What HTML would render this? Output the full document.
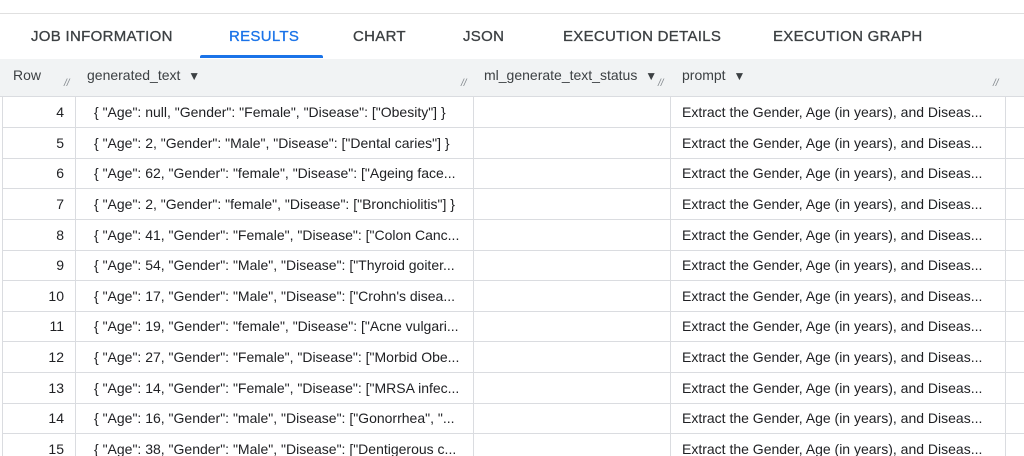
<!DOCTYPE html>
<html style="overflow:hidden;height:456px"><head><meta charset="utf-8"><style>
body{margin:0;width:1024px;height:456px;overflow:hidden;background:#fff;font-family:"Liberation Sans",Arial,sans-serif;position:relative}
.top{position:absolute;left:0;top:0;width:1024px;height:13px;border-bottom:1px solid #e0e0e0}
.tab{position:absolute;top:28px;font-size:15px;color:#3c4043;letter-spacing:0.3px;-webkit-text-stroke:0.3px #3c4043}
.ul{position:absolute;left:200px;top:55px;width:123px;height:3px;background:#1a73e8;border-radius:2px 2px 0 0}
.hdr{position:absolute;left:0;top:59px;width:1024px;height:37px;background:#f1f3f4;border-bottom:1px solid #dadce0}
.h{position:absolute;top:67px;font-size:14px;color:#3c4043}
.h b{font-size:12px;font-weight:normal;margin-left:4px}
.rs{position:absolute;top:78px;font-size:10px;color:#80868b;font-style:italic}
.row{position:absolute;left:2px;width:1022px;height:30px;border-bottom:1px solid #dadce0;font-size:14px;color:#202124}
.row span{position:absolute;top:7px;white-space:nowrap}
.n{right:960px;text-align:right}
.vl{position:absolute;width:1px;background:#dadce0}
</style></head><body>
<div class="top"></div>
<div class="tab" style="left:31px">JOB INFORMATION</div>
<div class="tab" style="left:229px;color:#1a73e8;-webkit-text-stroke:0.3px #1a73e8">RESULTS</div>
<div class="tab" style="left:353px">CHART</div>
<div class="tab" style="left:463px">JSON</div>
<div class="tab" style="left:563px">EXECUTION DETAILS</div>
<div class="tab" style="left:773px">EXECUTION GRAPH</div>
<div class="ul"></div>
<div class="hdr"></div>
<div class="h" style="left:13px">Row</div>
<div class="h" style="left:87px">generated_text <b>▼</b></div>
<div class="h" style="left:484px">ml_generate_text_status <b>▼</b></div>
<div class="h" style="left:682px">prompt <b>▼</b></div>
<div class="rs" style="left:64px">//</div>
<div class="rs" style="left:461px">//</div>
<div class="rs" style="left:658px">//</div>
<div class="rs" style="left:993px">//</div>
<div class="row" style="top:97px"><span class="n">4</span><span style="left:92px">{ "Age": null, "Gender": "Female", "Disease": ["Obesity"] }</span><span style="left:680px">Extract the Gender, Age (in years), and Diseas...</span></div>
<div class="row" style="top:128px"><span class="n">5</span><span style="left:92px">{ "Age": 2, "Gender": "Male", "Disease": ["Dental caries"] }</span><span style="left:680px">Extract the Gender, Age (in years), and Diseas...</span></div>
<div class="row" style="top:158px"><span class="n">6</span><span style="left:92px">{ "Age": 62, "Gender": "female", "Disease": ["Ageing face...</span><span style="left:680px">Extract the Gender, Age (in years), and Diseas...</span></div>
<div class="row" style="top:189px"><span class="n">7</span><span style="left:92px">{ "Age": 2, "Gender": "female", "Disease": ["Bronchiolitis"] }</span><span style="left:680px">Extract the Gender, Age (in years), and Diseas...</span></div>
<div class="row" style="top:220px"><span class="n">8</span><span style="left:92px">{ "Age": 41, "Gender": "Female", "Disease": ["Colon Canc...</span><span style="left:680px">Extract the Gender, Age (in years), and Diseas...</span></div>
<div class="row" style="top:250px"><span class="n">9</span><span style="left:92px">{ "Age": 54, "Gender": "Male", "Disease": ["Thyroid goiter...</span><span style="left:680px">Extract the Gender, Age (in years), and Diseas...</span></div>
<div class="row" style="top:281px"><span class="n">10</span><span style="left:92px">{ "Age": 17, "Gender": "Male", "Disease": ["Crohn's disea...</span><span style="left:680px">Extract the Gender, Age (in years), and Diseas...</span></div>
<div class="row" style="top:311px"><span class="n">11</span><span style="left:92px">{ "Age": 19, "Gender": "female", "Disease": ["Acne vulgari...</span><span style="left:680px">Extract the Gender, Age (in years), and Diseas...</span></div>
<div class="row" style="top:342px"><span class="n">12</span><span style="left:92px">{ "Age": 27, "Gender": "Female", "Disease": ["Morbid Obe...</span><span style="left:680px">Extract the Gender, Age (in years), and Diseas...</span></div>
<div class="row" style="top:373px"><span class="n">13</span><span style="left:92px">{ "Age": 14, "Gender": "Female", "Disease": ["MRSA infec...</span><span style="left:680px">Extract the Gender, Age (in years), and Diseas...</span></div>
<div class="row" style="top:403px"><span class="n">14</span><span style="left:92px">{ "Age": 16, "Gender": "male", "Disease": ["Gonorrhea", "...</span><span style="left:680px">Extract the Gender, Age (in years), and Diseas...</span></div>
<div class="row" style="top:434px;height:22px;border-bottom:none"><span class="n">15</span><span style="left:92px">{ "Age": 38, "Gender": "Male", "Disease": ["Dentigerous c...</span><span style="left:680px">Extract the Gender, Age (in years), and Diseas...</span></div>
<div class="vl" style="left:2px;top:96px;height:360px"></div>
<div class="vl" style="left:75px;top:96px;height:360px"></div>
<div class="vl" style="left:473px;top:96px;height:360px"></div>
<div class="vl" style="left:670px;top:96px;height:360px"></div>
<div class="vl" style="left:1005px;top:96px;height:360px"></div>
</body></html>
